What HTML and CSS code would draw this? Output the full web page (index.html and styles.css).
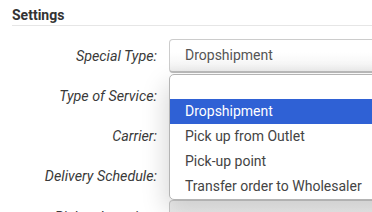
FILE: index.html
```html
<!DOCTYPE html>
<html lang="en">
<head>
  <meta charset="UTF-8" />
  <meta name="viewport" content="width=device-width, initial-scale=1.0"/>
  <title>Settings</title>
  <link rel="stylesheet" href="styles.css">
</head>
<body>
  <div class="panel">
    <h3 class="title">Settings</h3>

    <div class="form">
      <div class="row">
        <label>Special Type:</label>
        <div class="field">
          <div class="select">Dropshipment</div>
          <ul class="dropdown">
            <li class="active">Dropshipment</li>
            <li>Pick up from Outlet</li>
            <li>Pick-up point</li>
            <li>Transfer order to Wholesaler</li>
          </ul>
        </div>
      </div>
      <div class="row">
        <label>Type of Service:</label>
        <div class="field"><div class="select"></div></div>
      </div>
      <div class="row">
        <label>Carrier:</label>
        <div class="field"><div class="select"></div></div>
      </div>
      <div class="row">
        <label>Delivery Schedule:</label>
        <div class="field"><div class="select"></div></div>
      </div>
      <div class="row">
        <label>Pickup Location:</label>
        <div class="field"><div class="select disabled"></div></div>
      </div>
    </div>
  </div>
</body>
</html>
```

FILE: styles.css
```css
body {
  margin: 0;
  font-family: Roboto, 'Liberation Sans', sans-serif;
  font-size: 14px;
  color: #333;
  background: #fff;
  overflow: hidden;
}
.panel {
  padding-left: 12px;
}
.title {
  margin: 0;
  padding-top: 5px;
  font-size: 14px;
  font-weight: bold;
  line-height: 20px;
  color: #333;
  border-bottom: 1px solid #e6e6e6;
}
.form {
  margin-top: 13px;
}
.row {
  display: flex;
  height: 34px;
  margin-bottom: 6.3px;
}
.row label {
  width: 145px;
  flex-shrink: 0;
  margin-right: 12px;
  padding-top: 6.5px;
  font-size: 14.3px;
  line-height: 20px;
  text-align: right;
  font-style: italic;
  color: #3a3a3a;
}
.field {
  position: relative;
  width: 240px;
  flex-shrink: 0;
}
.select {
  box-sizing: border-box;
  height: 34px;
  padding: 0 15px;
  line-height: 31px;
  color: #555;
  border: 1px solid #ccc;
  border-bottom: 2px solid #bbb;
  border-radius: 4px;
  background: linear-gradient(#fff 40%, #f7f7f7 75%, #ececec 100%);
}
.select.disabled {
  background: linear-gradient(#efefef, #e6e6e6);
  border-color: #c8c8c8;
}
.dropdown {
  position: absolute;
  top: 35px;
  left: 0;
  z-index: 10;
  width: 240px;
  margin: 0;
  padding: 23.5px 0 0;
  list-style: none;
  background: #fff;
  border: 1px solid #b4b4b4;
  border-radius: 5px;
  box-shadow: -4px 10px 24px rgba(0,0,0,0.15);
}
.dropdown li {
  padding: 0 15px;
  line-height: 25px;
  color: #444;
  white-space: nowrap;
}
.dropdown li.active {
  background: #2f61d5;
  color: #fff;
}
```
